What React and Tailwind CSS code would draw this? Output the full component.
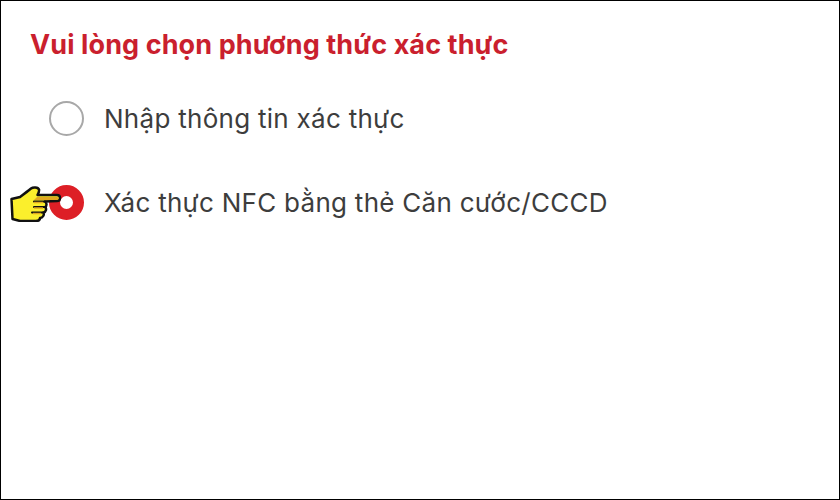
export default function App() {
  return (
    <div className="w-[840px] h-[500px] bg-white border border-black box-border pl-[29px] pt-[26px] font-['Inter',sans-serif] overflow-hidden">
      <h1 className="text-[27px] leading-[36px] font-bold text-[#ca1f2e] tracking-[0.1px]">Vui lòng chọn phương thức xác thực</h1>
      <div className="flex flex-col gap-[48px] mt-[37px] pl-[19px]">
        <div className="flex items-center gap-[20px] h-[36px]">
          <div className="w-[35px] h-[35px] rounded-full border-2 border-[#a8a8a8] box-border" />
          <span className="text-[26px] text-[#3d3d3d] tracking-[0.28px]">Nhập thông tin xác thực</span>
        </div>
        <div className="flex items-center gap-[20px] h-[36px] relative">
          <div className="w-[35px] h-[35px] rounded-full border-[11px] border-[#dd1f26] bg-white box-border" />
          <span className="text-[26px] text-[#3d3d3d] tracking-[0.28px]">Xác thực NFC bằng thẻ Căn cước/CCCD</span>
          <svg className="absolute left-[-39px] top-[2px]" width="52" height="36" viewBox="0 0 52 36">
            <path d="M1.500 13 L10 11 C14 8 18 5 21 2.500 C23 1 28 1 29 3.500 C29.500 5 28.500 7 27.500 9 L47 9 C51 9 51 15 47 15 L35 15.500 C37 17 37 20 35 21 C37 22.500 36 26 33.500 26.500 C34.500 28.500 33 32 30 32 C30 34 28.500 35 26 35 L10 35 L2.500 33 Z" fill="#fbef2c" stroke="#111" strokeWidth="2.500" strokeLinejoin="round" />
            <path d="M27 11 L47 11 C49 11 49 14 47 14 L24 14" fill="#e0a91f" stroke="none" />
            <path d="M24 15.500 L35 15.500 M24 21 L35 21 M22 26.500 L33 26.500" fill="none" stroke="#111" strokeWidth="2" strokeLinecap="round" />
            <path d="M24 16.500 L33 16.500 M24 22 L33 22 M23 27.500 L31 27.500" fill="none" stroke="#e0a91f" strokeWidth="1.500" />
          </svg>
        </div>
      </div>
    </div>
  );
}
